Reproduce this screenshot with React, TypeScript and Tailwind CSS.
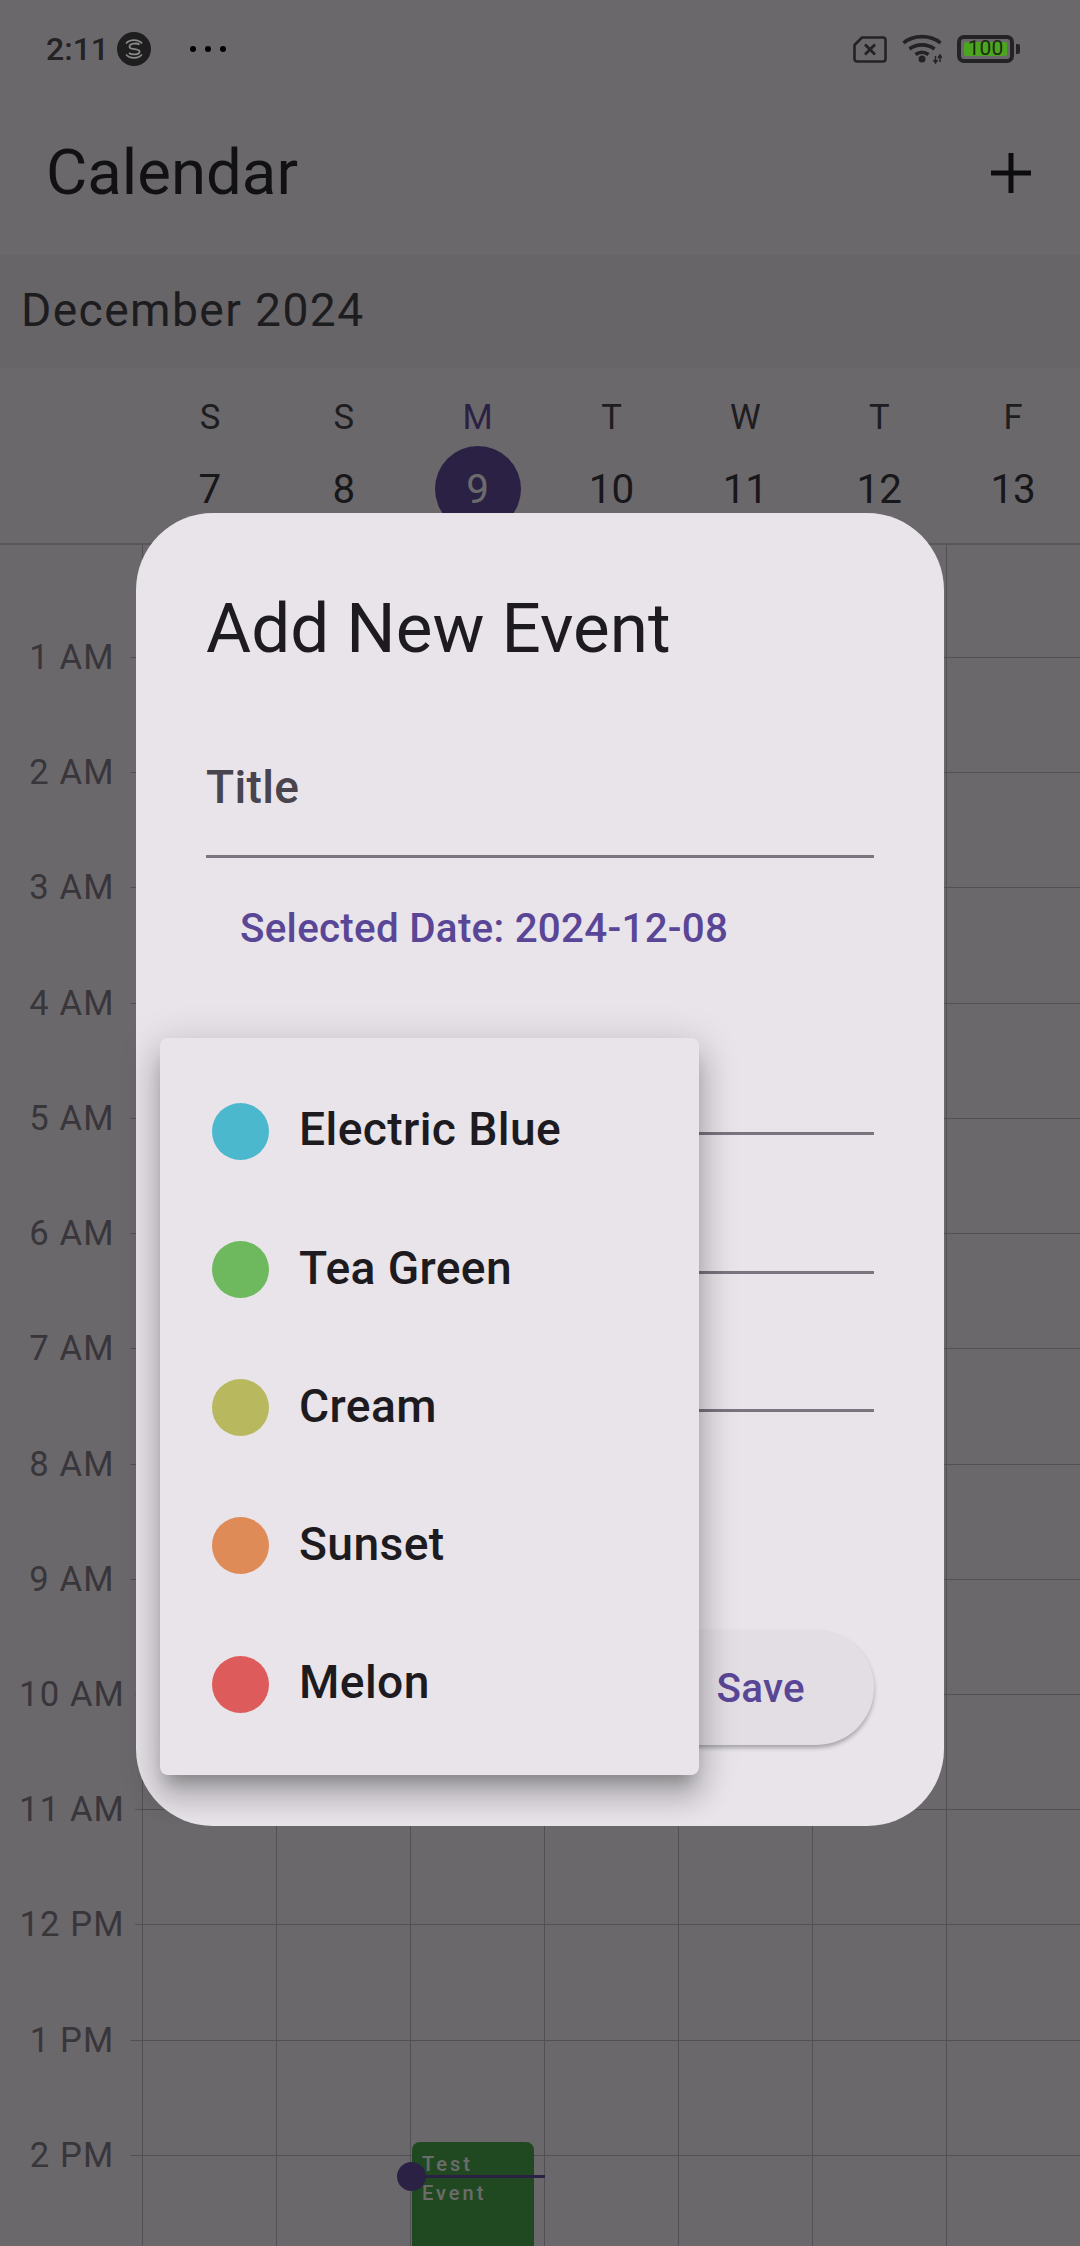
const hours = ['1 AM', '2 AM', '3 AM', '4 AM', '5 AM', '6 AM', '7 AM', '8 AM', '9 AM', '10 AM', '11 AM', '12 PM', '1 PM', '2 PM'];
const days = [
  { letter: 'S', num: '7' },
  { letter: 'S', num: '8' },
  { letter: 'M', num: '9', today: true },
  { letter: 'T', num: '10' },
  { letter: 'W', num: '11' },
  { letter: 'T', num: '12' },
  { letter: 'F', num: '13' },
];
const colors = [
  { name: 'Electric Blue', dot: 'bg-[#4bb8ce]' },
  { name: 'Tea Green', dot: 'bg-[#6eb85e]' },
  { name: 'Cream', dot: 'bg-[#b8b85e]' },
  { name: 'Sunset', dot: 'bg-[#df8b58]' },
  { name: 'Melon', dot: 'bg-[#de5b5b]' },
];

function StatusBar() {
  return (
    <div className="absolute top-0 left-0 z-30 flex h-[98px] w-full items-center justify-between pr-[60px] pl-[46px] text-[#232225]">
      <div className="flex items-center">
        <span className="text-[32px] font-medium">2:11</span>
        <svg viewBox="0 0 34 34" className="ml-[8px] h-[34px] w-[34px]">
          <circle cx="17" cy="17" r="17" fill="#1e1e1e" />
          <path d="M9 11.500c3.500-4.500 12.500-4.500 16 0M9 22.500c3.500 4.500 12.500 4.500 16 0" fill="none" stroke="#8a8a8a" strokeWidth="1.600" />
          <path d="M22.500 12.500c-2-1.500-10-1.500-10 2.200s10 1 10 4.800-8 3.500-10.500 1.500" fill="none" stroke="#8a8a8a" strokeWidth="1.800" />
        </svg>
        <div className="ml-[39px] flex gap-[9px]">
          <div className="h-[6px] w-[6px] rounded-full bg-black" />
          <div className="h-[6px] w-[6px] rounded-full bg-black" />
          <div className="h-[6px] w-[6px] rounded-full bg-black" />
        </div>
      </div>
      <div className="flex items-center">
        <svg viewBox="0 0 34 27" className="h-[27px] w-[34px]">
          <path d="M9 1.500h21a2.500 2.500 0 0 1 2.500 2.500v19a2.500 2.500 0 0 1-2.500 2.500H4A2.500 2.500 0 0 1 1.500 23V9z" fill="none" stroke="#232225" strokeWidth="2.600" strokeLinejoin="round" />
          <path d="M12 8.500l10 10M22 8.500l-10 10" stroke="#232225" strokeWidth="2.800" />
        </svg>
        <svg viewBox="0 0 40 30" className="ml-[15px] h-[30px] w-[40px]">
          <path d="M1.500 9c10-8.500 27-8.500 37 0M7.500 15c7-5.500 18-5.500 25 0M13.500 20.500c4-2.800 9-2.800 13 0" fill="none" stroke="#232225" strokeWidth="3.600" />
          <circle cx="20" cy="25" r="3.500" fill="#232225" />
          <path d="M33.500 22v7M38 21v7M31.500 26l2 3 2-3M36 24l2-3 2 3" fill="none" stroke="#232225" strokeWidth="1.400" />
        </svg>
        <div className="ml-[15px] flex h-[28px] w-[57px] items-center justify-center rounded-[7px] border-[4px] border-[#232225]">
          <div className="flex h-[14px] w-[43px] items-center justify-center rounded-[2px] bg-[#4ca51e] text-[21px] text-[#1d2b14]">
            100
          </div>
        </div>
        <div className="ml-[2px] h-[10px] w-[4px] rounded-r-[2px] bg-[#232225]" />
      </div>
    </div>
  );
}

function WeekHeader() {
  return (
    <div className="flex h-[177px] border-b-2 border-[#d2cdd6] pl-[143px]">
      {days.map((day) => (
        <div key={day.num} className="flex w-[134px] flex-col items-center">
          <span className={`mt-[28px] text-[34.650px] leading-[42px] ${day.today ? 'text-[#6750a4]' : 'text-[#49474d]'}`}>{day.letter}</span>
          <div
            className={`mt-[8px] flex h-[86px] w-[86px] items-center justify-center rounded-full pt-[2px] text-[40.400px] ${
              day.today ? 'bg-[#6750a4] text-white' : 'text-[#3a383e]'
            }`}
          >
            {day.num}
          </div>
        </div>
      ))}
    </div>
  );
}

function TimeGrid() {
  return (
    <div className="relative flex-1 overflow-hidden">
      <div className="absolute inset-0 flex pl-[142px]">
        {days.map((day) => (
          <div key={day.num} className="w-[134px] border-l border-[#c4bfc9]" />
        ))}
      </div>
      <div className="relative flex flex-col pt-[112px]">
        {hours.map((hour) => (
          <div key={hour} className="flex h-[115.230px] items-start">
            <span className="w-[144px] -translate-y-[21px] text-center text-[34.650px] leading-[42px] tracking-[1.100px] text-[#86828c]">{hour}</span>
            <div className={`h-px flex-1 bg-[#c4bfc9] ${hour.length > 4 ? 'ml-[-9px]' : 'ml-[-14px]'}`} />
          </div>
        ))}
      </div>
      <div className="absolute top-[1597px] left-[412px] h-[300px] w-[122px] rounded-[8px] bg-[#4caf50] px-[10px] py-[8px] text-[20px] leading-[29px] font-medium tracking-[3px] text-white">
        Test Event
      </div>
      <div className="absolute top-[1630px] left-[412px] h-[3px] w-[133px] bg-[#6750a4]" />
      <div className="absolute top-[1617px] left-[397px] h-[29px] w-[29px] rounded-full bg-[#6750a4]" />
    </div>
  );
}

function Dialog() {
  return (
    <div className="absolute top-[513px] left-[136px] z-20 h-[1313px] w-[808px] rounded-[77px] bg-[#e8e4ea] px-[70px] pt-[72px]">
      <h2 className="text-[69.200px] leading-[88px] text-[#1d1b20]">Add New Event</h2>
      <div className="mt-[88px] border-b-[3px] border-[#79747e] pb-[42px] text-[46.200px] leading-[52px] font-medium tracking-[0.300px] text-[#49454f]">Title</div>
      <div className="mt-[48px] pl-[34px] text-[40.400px] leading-[46px] font-medium tracking-[0.250px] text-[#5a4696]">Selected Date: 2024-12-08</div>
      <div className="mt-[180px] h-[3px] bg-[#79747e]" />
      <div className="mt-[136px] h-[3px] bg-[#79747e]" />
      <div className="mt-[135px] h-[3px] bg-[#79747e]" />
      <div className="mt-[218px] flex justify-end">
        <div className="flex h-[115px] w-[300px] items-center justify-end rounded-full bg-[#e2dee4] pt-[3px] pr-[69px] text-[40.400px] font-medium tracking-[0.300px] text-[#5a4696] shadow-[0_3px_4px_rgba(0,0,0,0.28)]">
          Save
        </div>
      </div>
    </div>
  );
}

function ColorMenu() {
  return (
    <div className="absolute top-[1038px] left-[160px] z-30 h-[737px] w-[539px] rounded-[8px] bg-[#e8e4ea] pt-[24px] shadow-[0_14px_14px_-8px_rgba(0,0,0,0.22),0_22px_28px_3px_rgba(0,0,0,0.16),0_8px_38px_6px_rgba(0,0,0,0.14)]">
      {colors.map((color) => (
        <div key={color.name} className="flex h-[138.250px] items-center pl-[52px]">
          <div className={`h-[57px] w-[57px] rounded-full ${color.dot}`} />
          <span className="ml-[30px] pb-[2px] text-[46.200px] font-medium tracking-[0.380px] text-[#1d1b20]">{color.name}</span>
        </div>
      ))}
    </div>
  );
}

export default function App() {
  return (
    <div className="relative h-[2246px] w-[1080px] overflow-hidden bg-[#fef7ff] font-['Roboto',sans-serif]">
      <div className="flex h-full flex-col">
        <div className="flex h-[255px] items-end justify-between px-[46px] pb-[42px]">
          <h1 className="text-[63.500px] leading-[80px] text-[#2a282d]">Calendar</h1>
          <svg viewBox="0 0 40 40" className="mr-[3px] mb-[20px] h-[40px] w-[40px]">
            <path d="M20 0v40M0 20h40" stroke="#1d1b20" strokeWidth="5" />
          </svg>
        </div>
        <div className="flex h-[113px] items-center bg-[#f7f1f9] pb-[2px] pl-[21px] text-[46.200px] tracking-[1.400px] text-[#47454b]">December 2024</div>
        <WeekHeader />
        <TimeGrid />
      </div>
      <div className="absolute inset-0 z-10 bg-black/[0.58]" />
      <StatusBar />
      <Dialog />
      <ColorMenu />
    </div>
  );
}
